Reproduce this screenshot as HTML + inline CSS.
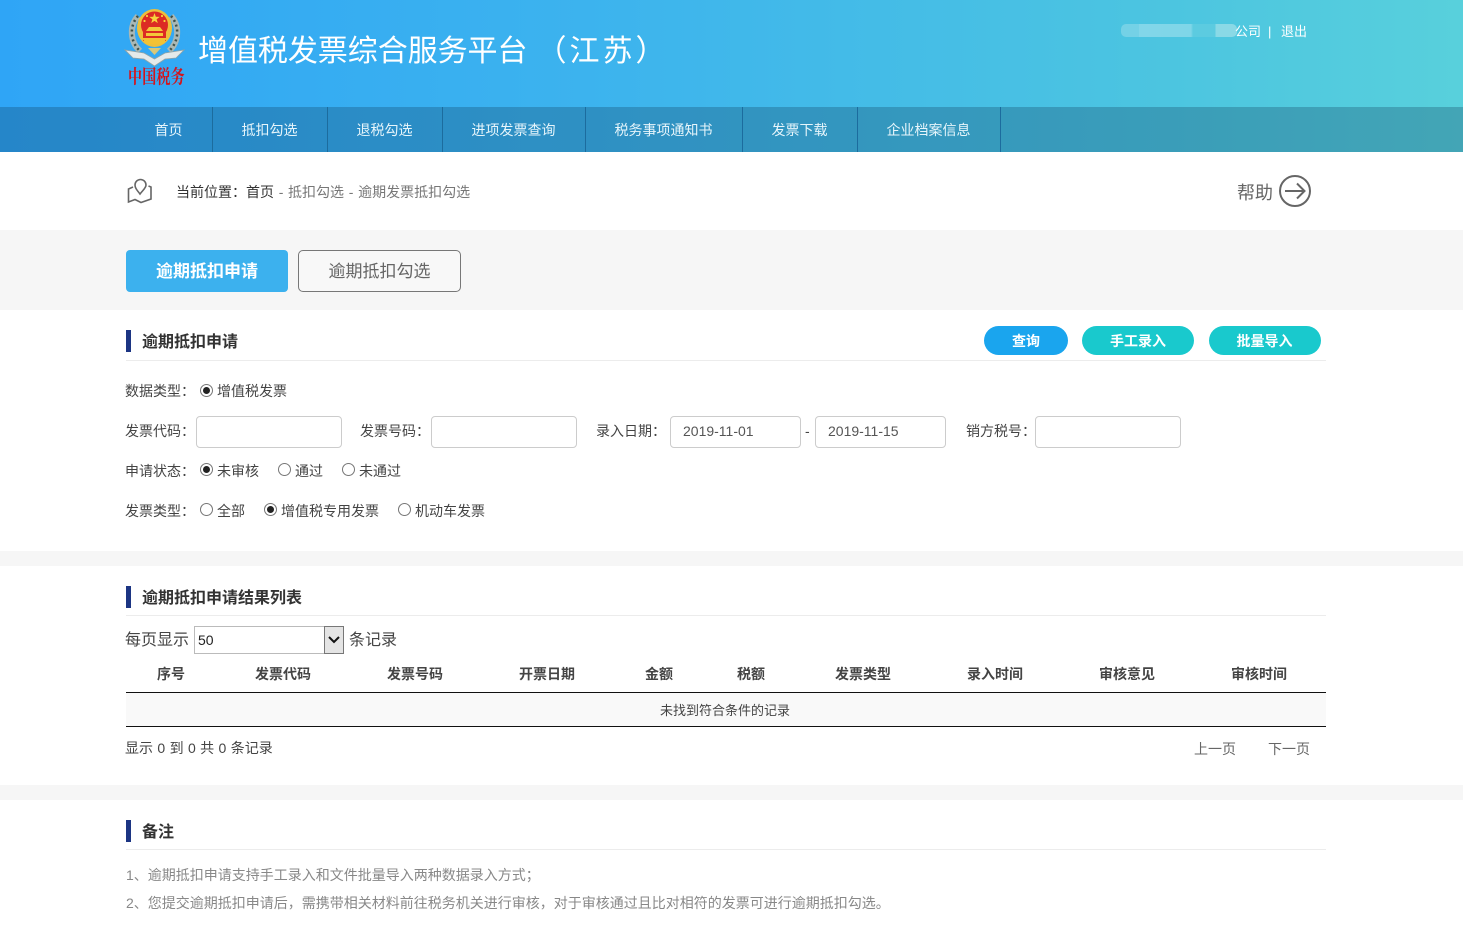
<!DOCTYPE html>
<html lang="zh-CN"><head><meta charset="utf-8"><title>增值税发票综合服务平台</title>
<style>
*{box-sizing:border-box}
html,body{margin:0;padding:0}
body{width:1463px;height:931px;position:relative;overflow:hidden;background:#fff;font-family:"Liberation Sans","Noto Sans CJK SC",sans-serif;font-size:14px;color:#444}
.a{position:absolute;white-space:nowrap}
.t{position:absolute;white-space:nowrap;line-height:20px;height:20px}
.hdr{left:0;top:0;width:1463px;height:152px;background:linear-gradient(90deg,#2fa5f6 0%,#3cb3ee 40%,#4cc5e0 80%,#58d0dc 100%)}
.nav{left:0;top:107px;width:1463px;height:45px;background:rgba(10,50,80,.27)}
.n{position:absolute;top:108px;height:44px;line-height:44px;color:#e6f5fb;text-align:center;font-size:14px;padding-right:2px}
.s{position:absolute;top:107px;width:1px;height:45px;background:#1c6c9e}
.gray{position:absolute;left:0;width:1463px;background:#f6f6f6}
.bar{position:absolute;left:126px;width:5px;height:22px;background:#1c3583}
.h{position:absolute;left:142px;font-size:16px;font-weight:700;color:#333;line-height:22px;white-space:nowrap}
.ln{position:absolute;left:126px;width:1200px;height:1px;background:#ececec}
.pill{position:absolute;top:326px;height:29px;border-radius:15px;color:#fff;font-weight:700;text-align:center;line-height:30px;font-size:14px}
.inp{position:absolute;top:416px;height:32px;border:1px solid #ccc;border-radius:4px;background:#fff;color:#555;line-height:28px;padding-left:12px;font-size:14px}
.r{position:absolute;width:13px;height:13px;border:1px solid #777;border-radius:50%;background:#fff}
.r.c:after{content:"";position:absolute;left:2px;top:2px;width:7px;height:7px;border-radius:50%;background:#222}
.th{position:absolute;top:664px;line-height:20px;font-size:14px;font-weight:700;color:#444;white-space:nowrap;transform:translateX(-50%)}
</style></head><body>
<div class="a hdr"></div>
<svg class="a" style="left:124px;top:6px" width="64" height="62" viewBox="0 0 64 62">
<path d="M14 10C5 20 6 36 16 45" fill="none" stroke="#a9b8b6" stroke-width="6"/>
<path d="M47 10C56 20 55 36 45 45" fill="none" stroke="#a9b8b6" stroke-width="6"/>
<path d="M14 10C5 20 6 36 16 45M47 10C56 20 55 36 45 45" fill="none" stroke="#3f5048" stroke-width="2.500" stroke-dasharray="2 3"/>
<path d="M1 44L20 47L30.500 53L41 47L60 44L52 52L41 53L30.500 60L20 53L9 52Z" fill="#e4eaea" stroke="#8fa3a6" stroke-width=".8"/>
<ellipse cx="30.500" cy="22" rx="17.500" ry="19" fill="#eebf3a"/>
<circle cx="30.500" cy="19" r="13.500" fill="#dc2a24"/>
<rect x="19" y="20" width="23" height="15" fill="#dc2a24"/>
<path d="M30.500 7l1.300 3.800 4 .1-3.200 2.400 1.200 3.800-3.300-2.200-3.300 2.200 1.200-3.800-3.200-2.400 4-.1z" fill="#f7d33c"/>
<circle cx="23" cy="10" r="1.100" fill="#f7d33c"/><circle cx="20.500" cy="15" r="1.100" fill="#f7d33c"/><circle cx="38" cy="10" r="1.100" fill="#f7d33c"/><circle cx="40.500" cy="15" r="1.100" fill="#f7d33c"/>
<path d="M25 21H36L39 25H22ZM22 27H39V30H22Z" fill="#f4c63a"/>
<path d="M18 32H43L39 38H22Z" fill="#f2c234"/>
<path d="M24 42H37L30.500 49Z" fill="#d8c878"/>
</svg>
<div class="a" style="left:128px;top:68px;width:60px;font-family:'Liberation Serif','Noto Serif CJK SC',serif;font-size:14px;font-weight:700;line-height:22px;color:#d4141c;letter-spacing:.2px;transform:scale(1,1.35)">中国税务</div>
<div class="a" style="left:198px;top:31px;font-size:30px;line-height:42px;color:#fff"><span style="letter-spacing:-.05px">增值税发票综合服务平台</span><span style="margin-left:9px;letter-spacing:3px">（江苏）</span></div>
<div class="a" style="left:1121px;top:24px;width:116px;height:13px;border-radius:5px;background:linear-gradient(90deg,#74d1e6 0,#74d1e6 18px,#82d6e9 18px,#7fd6e8 70px,#5ccbe0 72px,#5ccbe0 94px,#8ad9e6 95px)"></div>
<div class="t" style="left:1235px;top:22px;font-size:13px;color:#fff">公司</div>
<div class="t" style="left:1268px;top:22px;font-size:13px;color:#fff">|</div>
<div class="t" style="left:1281px;top:22px;font-size:13px;color:#fff">退出</div>
<div class="a nav"></div>
<div class="n" style="left:126px;width:87px">首页</div><div class="s" style="left:212px"></div>
<div class="n" style="left:213px;width:115px">抵扣勾选</div><div class="s" style="left:327px"></div>
<div class="n" style="left:328px;width:115px">退税勾选</div><div class="s" style="left:442px"></div>
<div class="n" style="left:443px;width:143px">进项发票查询</div><div class="s" style="left:585px"></div>
<div class="n" style="left:586px;width:157px">税务事项通知书</div><div class="s" style="left:742px"></div>
<div class="n" style="left:743px;width:115px">发票下载</div><div class="s" style="left:857px"></div>
<div class="n" style="left:858px;width:143px">企业档案信息</div><div class="s" style="left:1000px"></div>

<svg class="a" style="left:126px;top:178px" width="28" height="26" viewBox="0 0 28 26" fill="none" stroke="#666" stroke-width="1.600">
<path d="M14 16C11 12 9 10 9 7A5.500 5.500 0 0 1 20 7C20 10 17 12 14 16Z"/>
<path d="M7 9L2.500 11V24L9 21.500L15 24.500L25 21V9L22.500 8"/>
</svg>
<div class="t" style="left:176px;top:182px;font-size:14px;color:#333;word-spacing:.8px">当前位置：首页<span style="color:#777"> - 抵扣勾选 - 逾期发票抵扣勾选</span></div>
<div class="t" style="left:1237px;top:182px;font-size:18px;line-height:22px;height:22px;color:#666">帮助</div>
<svg class="a" style="left:1278px;top:174px" width="34" height="34" viewBox="0 0 34 34" fill="none" stroke="#666" stroke-width="2">
<circle cx="17" cy="17" r="15"/><path d="M7 17H26M19 9.500L26.500 17L19 24.500"/>
</svg>

<div class="gray" style="top:230px;height:80px"></div>
<div class="a" style="left:126px;top:250px;width:162px;height:42px;border-radius:4px;background:#3cb1ee;color:#fff;font-size:17px;font-weight:700;text-align:center;line-height:44px">逾期抵扣申请</div>
<div class="a" style="left:298px;top:250px;width:163px;height:42px;border-radius:5px;border:1px solid #777;background:#f8f8f8;color:#666;font-size:17px;text-align:center;line-height:42px">逾期抵扣勾选</div>

<div class="bar" style="top:330px"></div>
<div class="h" style="top:332px">逾期抵扣申请</div>
<div class="ln" style="top:360px"></div>
<div class="pill" style="left:984px;width:84px;background:#1aa5ee">查询</div>
<div class="pill" style="left:1082px;width:112px;background:#19c9cd">手工录入</div>
<div class="pill" style="left:1209px;width:112px;background:#19c9cd;padding-right:1px">批量导入</div>

<div class="t" style="left:125px;top:381px">数据类型：</div>
<div class="r c" style="left:200px;top:384px"></div>
<div class="t" style="left:217px;top:381px">增值税发票</div>

<div class="t" style="left:125px;top:421px">发票代码：</div>
<div class="inp" style="left:196px;width:146px"></div>
<div class="t" style="left:360px;top:421px">发票号码：</div>
<div class="inp" style="left:431px;width:146px"></div>
<div class="t" style="left:596px;top:421px">录入日期：</div>
<div class="inp" style="left:670px;width:131px">2019-11-01</div>
<div class="t" style="left:805px;top:421px">-</div>
<div class="inp" style="left:815px;width:131px">2019-11-15</div>
<div class="t" style="left:966px;top:421px">销方税号：</div>
<div class="inp" style="left:1035px;width:146px"></div>

<div class="t" style="left:125px;top:461px">申请状态：</div>
<div class="r c" style="left:200px;top:463px"></div>
<div class="t" style="left:217px;top:461px">未审核</div>
<div class="r" style="left:278px;top:463px"></div>
<div class="t" style="left:295px;top:461px">通过</div>
<div class="r" style="left:342px;top:463px"></div>
<div class="t" style="left:359px;top:461px">未通过</div>

<div class="t" style="left:125px;top:501px">发票类型：</div>
<div class="r" style="left:200px;top:503px"></div>
<div class="t" style="left:217px;top:501px">全部</div>
<div class="r c" style="left:264px;top:503px"></div>
<div class="t" style="left:281px;top:501px">增值税专用发票</div>
<div class="r" style="left:398px;top:503px"></div>
<div class="t" style="left:415px;top:501px">机动车发票</div>

<div class="gray" style="top:551px;height:15px"></div>

<div class="bar" style="top:586px"></div>
<div class="h" style="top:588px">逾期抵扣申请结果列表</div>
<div class="ln" style="top:615px"></div>
<div class="t" style="left:125px;top:631px;font-size:16px;color:#444">每页显示</div>
<div class="a" style="left:194px;top:626px;width:150px;height:28px;border:1px solid #bbb;background:#fff;font-size:14px;line-height:26px;padding-left:3px;color:#222">50</div>
<div class="a" style="left:324px;top:626px;width:20px;height:28px;border:1px solid #777;background:#e4e4e4"></div>
<svg class="a" style="left:327px;top:635px" width="14" height="10" viewBox="0 0 14 10" fill="none" stroke="#111" stroke-width="2"><path d="M2 2L7 7L12 2"/></svg>
<div class="t" style="left:349px;top:631px;font-size:16px;color:#444">条记录</div>

<div class="th" style="left:171px">序号</div>
<div class="th" style="left:283px">发票代码</div>
<div class="th" style="left:415px">发票号码</div>
<div class="th" style="left:547px">开票日期</div>
<div class="th" style="left:659px">金额</div>
<div class="th" style="left:751px">税额</div>
<div class="th" style="left:863px">发票类型</div>
<div class="th" style="left:995px">录入时间</div>
<div class="th" style="left:1127px">审核意见</div>
<div class="th" style="left:1259px">审核时间</div>
<div class="a" style="left:126px;top:692px;width:1200px;height:35px;border-top:1px solid #111;border-bottom:1px solid #111;background:#f9f9f9;text-align:center;line-height:35px;font-size:13px;color:#444;padding-right:2px">未找到符合条件的记录</div>
<div class="t" style="left:125px;top:738px;font-size:14px;word-spacing:.5px">显示 0 到 0 共 0 条记录</div>
<div class="t" style="left:1194px;top:739px;font-size:14px;color:#666">上一页</div>
<div class="t" style="left:1268px;top:739px;font-size:14px;color:#666">下一页</div>

<div class="gray" style="top:785px;height:15px"></div>

<div class="bar" style="top:820px"></div>
<div class="h" style="top:822px">备注</div>
<div class="ln" style="top:849px"></div>
<div class="t" style="left:126px;top:865px;font-size:14px;color:#888">1、逾期抵扣申请支持手工录入和文件批量导入两种数据录入方式；</div>
<div class="t" style="left:126px;top:893px;font-size:14px;color:#888">2、您提交逾期抵扣申请后，需携带相关材料前往税务机关进行审核，对于审核通过且比对相符的发票可进行逾期抵扣勾选。</div>
</body></html>
